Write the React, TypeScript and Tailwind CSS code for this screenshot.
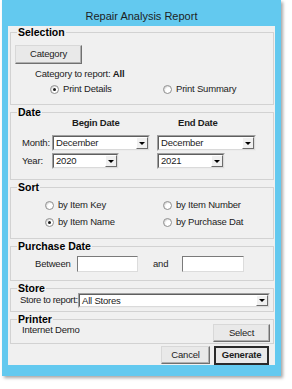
import React from 'react';

const Radio = ({ checked, label, className = '' }: { checked?: boolean; label: string; className?: string }) => (
  <div className={`flex items-center h-[12px] ${className}`}>
    <span className="w-[9px] h-[9px] rounded-full border border-[#8e8e8e] bg-white flex items-center justify-center shadow-[inset_1px_1px_1px_rgba(0,0,0,0.15)]">
      {checked && <span className="w-[3px] h-[3px] rounded-full bg-[#1a1a1a]" />}
    </span>
    <span className="ml-[4px] leading-[12px]">{label}</span>
  </div>
);

const Combo = ({ value, className = '' }: { value: string; className?: string }) => (
  <div className={`flex bg-white border border-t-[#a0a0a0] border-l-[#a0a0a0] border-r-[#ececec] border-b-[#ececec] ${className}`}>
    <div className="flex flex-1 border border-t-[#5f5f5f] border-l-[#5f5f5f] border-r-[#dadada] border-b-[#dadada]">
      <span className="flex-1 flex items-center pl-[2px] leading-none">{value}</span>
      <span className="w-[12px] bg-[#f0f0f0] border border-t-white border-l-white border-r-[#6d6d6d] border-b-[#6d6d6d] flex items-center justify-center">
        <span className="w-0 h-0 border-x-[3px] border-x-transparent border-t-[3px] border-t-black" />
      </span>
    </div>
  </div>
);

const Button = ({ label, className = '' }: { label: string; className?: string }) => (
  <div className={`flex items-center justify-center bg-[#e9e9e9] border border-t-[#d8d8d8] border-l-[#d8d8d8] border-r-[#707070] border-b-[#707070] shadow-[inset_-1px_-1px_0_#b0b0b0] ${className}`}>
    {label}
  </div>
);

const Group = ({ title, className = '', children }: { title: string; className?: string; children: React.ReactNode }) => (
  <fieldset className={`border border-[#d2d2d2] ${className}`}>
    <legend className="ml-[6px] px-[1px] text-[10.5px] leading-[13px] font-bold text-black tracking-normal">
      {title}
    </legend>
    {children}
  </fieldset>
);

export default function App() {
  return (
    <div className="w-[292px] h-[389px] bg-white pl-[2px] text-[9.5px] tracking-[-0.2px] text-[#1c1c1c] font-['Liberation_Sans',Arial,sans-serif]">
      <div className="w-[279px] h-[376px] bg-[#63c9ef] flex flex-col shadow-[2px_2px_3px_rgba(0,0,0,0.35)]">
        <div className="h-[26px] pt-[6px] flex items-center justify-center text-[11px] tracking-normal text-[#1e1e1e]">
          Repair Analysis Report
        </div>
        <div className="mx-[6px] h-[339px] bg-[#f0f0f0] pl-[2px] pr-[1px] flex flex-col gap-[1px]">
          <Group title="Selection" className="h-[79px]">
            <Button label="Category" className="mt-[6px] ml-[4px] w-[67px] h-[19px]" />
            <div className="mt-[4px] ml-[24px] leading-[12px]">
              Category to report: <span className="font-bold">All</span>
            </div>
            <div className="mt-[3px] pl-[39px] flex">
              <Radio checked label="Print Details" className="w-[113px]" />
              <Radio label="Print Summary" />
            </div>
          </Group>

          <Group title="Date" className="h-[74px]">
            <div className="-mt-[2px] h-[12px] flex font-bold leading-[12px] pl-[61px]">
              <span className="w-[106px]">Begin Date</span>
              <span>End Date</span>
            </div>
            <div className="mt-[6px] flex items-center">
              <span className="w-[41px] pl-[11px]">Month:</span>
              <div className="w-[105px]">
                <Combo value="December" className="w-[98px] h-[16px]" />
              </div>
              <Combo value="December" className="w-[99px] h-[16px]" />
            </div>
            <div className="mt-[2px] flex items-center">
              <span className="w-[41px] pl-[11px]">Year:</span>
              <div className="w-[105px]">
                <Combo value="2020" className="w-[67px] h-[16px]" />
              </div>
              <Combo value="2021" className="w-[68px] h-[16px]" />
            </div>
          </Group>

          <Group title="Sort" className="h-[58px]">
            <div className="mt-[5px] pl-[34px] flex">
              <Radio label="by Item Key" className="w-[118px]" />
              <Radio label="by Item Number" />
            </div>
            <div className="mt-[5px] pl-[34px] flex">
              <Radio checked label="by Item Name" className="w-[118px]" />
              <Radio label="by Purchase Dat" />
            </div>
          </Group>

          <Group title="Purchase Date" className="h-[41px]">
            <div className="mt-[3px] pl-[24px] flex items-center">
              <span className="w-[42px]">Between</span>
              <div className="w-[61px] h-[16px] bg-white border border-t-[#7a7a7a] border-l-[#7a7a7a] border-r-[#dcdcdc] border-b-[#dcdcdc]" />
              <span className="ml-[15px] w-[29px]">and</span>
              <div className="w-[62px] h-[16px] bg-white border border-t-[#7a7a7a] border-l-[#7a7a7a] border-r-[#dcdcdc] border-b-[#dcdcdc]" />
            </div>
          </Group>

          <Group title="Store" className="h-[30px]">
            <div className="-mt-[2px] pl-[9px] flex items-center">
              <span className="w-[58px] whitespace-nowrap tracking-[-0.35px]">Store to report:</span>
              <Combo value="All Stores" className="w-[192px] h-[15px]" />
            </div>
          </Group>

          <Group title="Printer" className="h-[31px]">
            <div className="-mt-[2px] flex items-start">
              <span className="pl-[11px] leading-[12px]">Internet Demo</span>
              <Button label="Select" className="ml-auto mr-[3px] w-[57px] h-[18px]" />
            </div>
          </Group>

          <div className="mt-[1px] pr-[5px] flex justify-end gap-[4px]">
            <Button label="Cancel" className="w-[49px] h-[18px]" />
            <div className="w-[55px] h-[19px] flex items-center justify-center font-bold bg-[#e9e9e9] border-2 border-[#2a2a2a]">
              Generate
            </div>
          </div>
        </div>
      </div>
    </div>
  );
}
